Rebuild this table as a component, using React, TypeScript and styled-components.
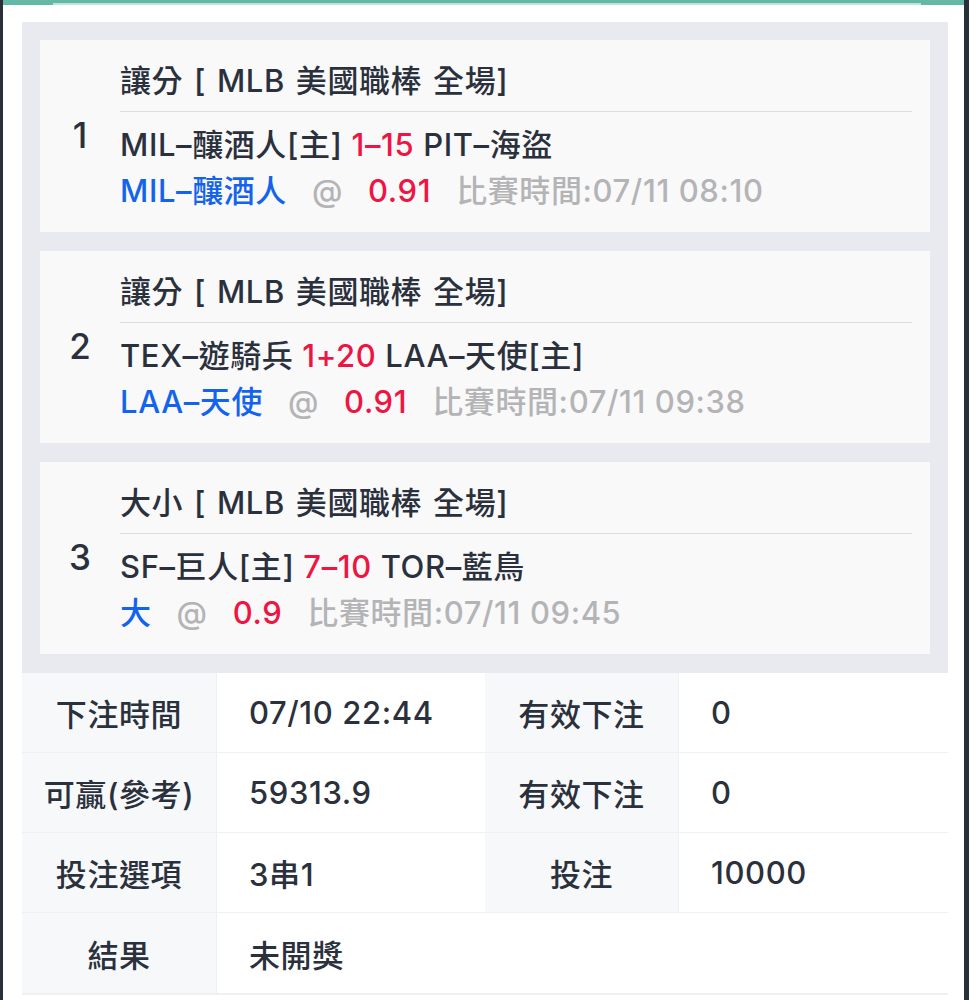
import styled, { createGlobalStyle } from "styled-components";

const GlobalStyle = createGlobalStyle`
	html, body {
		margin: 0;
		padding: 0;
		background: #fff;
	}
	body {
		font-family: Inter, "Noto Sans CJK TC", sans-serif;
		color: #2b313c;
	}
`;

type Leg = {
	market: string;
	home: string;
	score: string;
	away: string;
	pick: string;
	odds: string;
	time: string;
};

const legs: Leg[] = [
	{ market: "讓分", home: "MIL–釀酒人[主]", score: "1–15", away: "PIT–海盜", pick: "MIL–釀酒人", odds: "0.91", time: "07/11 08:10" },
	{ market: "讓分", home: "TEX–遊騎兵", score: "1+20", away: "LAA–天使[主]", pick: "LAA–天使", odds: "0.91", time: "07/11 09:38" },
	{ market: "大小", home: "SF–巨人[主]", score: "7–10", away: "TOR–藍鳥", pick: "大", odds: "0.9", time: "07/11 09:45" },
];

const App = () => {
	return (
		<Frame>
			<GlobalStyle />
			<TopBar />
			<Body>
				<LegPanel>
					{legs.map((leg, i) => (
						<Card key={i}>
							<Index>{i + 1}</Index>
							<CardContent>
								<Title>{leg.market} [ MLB 美國職棒 全場]</Title>
								<Line>
									{leg.home} <Red>{leg.score}</Red> {leg.away}
								</Line>
								<PickLine>
									<Blue>{leg.pick}</Blue>
									<Gray>@</Gray>
									<Red>{leg.odds}</Red>
									<Gray>比賽時間:{leg.time}</Gray>
								</PickLine>
							</CardContent>
						</Card>
					))}
				</LegPanel>
				<InfoTable>
					<Label>下注時間</Label>
					<Value>07/10 22:44</Value>
					<Label>有效下注</Label>
					<Value>0</Value>

					<Label>可贏(參考)</Label>
					<Value>59313.9</Value>
					<Label>有效下注</Label>
					<Value>0</Value>

					<Label>投注選項</Label>
					<Value>3串1</Value>
					<Label>投注</Label>
					<Value>10000</Value>

					<Label $last>結果</Label>
					<Value $wide $last>未開獎</Value>
				</InfoTable>
			</Body>
		</Frame>
	);
};

const Frame = styled.div`
	position: relative;
	width: 969px;
	height: 1000px;
	box-sizing: border-box;
	border-left: 3px solid #2a3038;
	border-right: 5px solid #2a3038;
	background: #fff;
	overflow: hidden;
`;

const TopBar = styled.div`
	height: 3px;
	background: #63b9a6;
	border-bottom: 2px solid transparent;
	position: relative;

	&::after {
		content: "";
		position: absolute;
		left: 50px;
		right: 43px;
		top: 3px;
		height: 2px;
		background: #bfe3da;
	}
`;

const Body = styled.div`
	padding: 17px 16px 0 19px;
`;

const LegPanel = styled.div`
	background: #e8eaf0;
	padding: 18px 18px 19px 18px;
	display: flex;
	flex-direction: column;
	gap: 19px;
`;

const Card = styled.div`
	display: flex;
	align-items: center;
	background: #f9f9fa;
	height: 192px;
	box-sizing: border-box;
`;

const Index = styled.div`
	width: 80px;
	flex-shrink: 0;
	text-align: center;
	font-size: 35px;
	font-weight: 500;
	color: #2b313c;
	margin-top: -2px;
`;

const CardContent = styled.div`
	flex: 1;
	padding-right: 18px;
	font-size: 31px;
	font-weight: 500;
	letter-spacing: 0.6px;
`;

const Title = styled.div`
	line-height: 46px;
	padding-bottom: 7px;
	border-bottom: 1px solid #dcdee2;
	margin-bottom: 10px;
	word-spacing: 2px;
`;

const Line = styled.div`
	line-height: 46px;
	white-space: nowrap;
`;

const PickLine = styled.div`
	line-height: 46px;
	display: flex;
	gap: 25px;
	white-space: nowrap;
`;

const Red = styled.span`
	color: #ee1543;
`;

const Blue = styled.span`
	color: #1463ec;
`;

const Gray = styled.span`
	color: #b4b4b6;
`;

const InfoTable = styled.div`
	display: grid;
	grid-template-columns: 195px 268px 194px 1fr;
	grid-auto-rows: 80px;
	font-size: 31px;
	font-weight: 500;
	letter-spacing: 0.6px;
	border-bottom: 2px solid #eef0f4;
`;

const Label = styled.div<{ $last?: boolean }>`
	display: flex;
	align-items: center;
	justify-content: center;
	background: #f7f8fa;
	border-right: 1px solid #eef0f4;
	border-bottom: ${(props) => (props.$last ? "none" : "1px solid #eef0f4")};
	color: #2b313c;
`;

const Value = styled.div<{ $wide?: boolean; $last?: boolean }>`
	display: flex;
	align-items: center;
	padding-left: 32px;
	background: #fff;
	border-bottom: ${(props) => (props.$last ? "none" : "1px solid #eef0f4")};
	grid-column: ${(props) => (props.$wide ? "span 3" : "auto")};
	color: #2b313c;
`;

export default App;
